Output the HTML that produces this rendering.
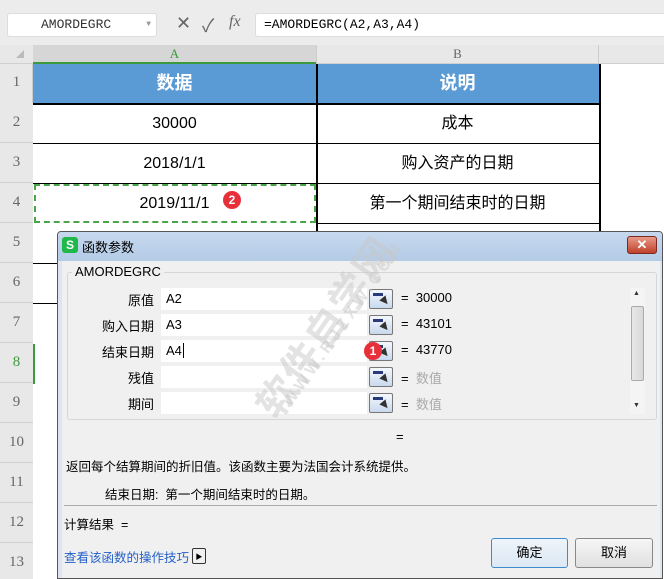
<!DOCTYPE html><html><head><meta charset="utf-8"><style>
*{margin:0;padding:0;box-sizing:border-box}
body{width:664px;height:579px;overflow:hidden;background:#fff;font-family:"Liberation Sans","Noto Sans CJK SC",sans-serif;position:relative}
.a{position:absolute}
.rn{position:absolute;left:0;width:33px;text-align:center;color:#666;font-family:"Liberation Serif","Noto Serif CJK SC",serif;font-size:15px}
.cell{position:absolute;text-align:center;font-size:16px;color:#000;line-height:39px}
.lbl{position:absolute;width:90px;text-align:right;font-size:13px;color:#000;left:64px}
.inp{position:absolute;left:161px;width:206px;height:22px;background:#fff;font-size:13px;padding-left:5px;line-height:22px}
.btn{position:absolute;left:369px;width:24px;height:20px;border:1px solid #777;border-radius:2px;background:linear-gradient(#f4f8fc,#c9d9ee)}
.btn i{position:absolute;left:3px;top:3px;width:10px;height:3px;background:#2a3a7a}
.btn b{position:absolute;left:11px;top:7px;width:0;height:0;border-left:4px solid transparent;border-right:4px solid transparent;border-top:8px solid #333;transform:rotate(-40deg)}
.eq{position:absolute;left:401px;font-size:13px}
</style></head><body>
<div class="a" style="left:0;top:0;width:664px;height:45px;background:#ececec"></div>
<div class="a" style="left:7px;top:13px;width:150px;height:24px;background:#fff;border:1px solid #ddd;border-radius:3px;font-family:'Liberation Mono',monospace;font-size:13px;line-height:22px;padding-left:33px;color:#333">AMORDEGRC<span style="position:absolute;right:5px;font-size:8px;color:#999">▼</span></div>
<div class="a" style="left:176px;top:13px;font-size:18px;color:#666">✕</div>
<div class="a" style="left:202px;top:12px;font-size:18px;color:#666">✓</div>
<div class="a" style="left:229px;top:13px;font-size:16px;color:#666;font-style:italic;font-family:'Liberation Serif',serif">fx</div>
<div class="a" style="left:255px;top:13px;width:420px;height:24px;background:#fff;border:1px solid #ddd;border-radius:3px;font-family:'Liberation Mono',monospace;font-size:13px;line-height:22px;padding-left:8px;color:#000">=AMORDEGRC(A2,A3,A4)</div>
<div class="a" style="left:0;top:45px;width:664px;height:19px;background:#e8e8e8;border-bottom:1px solid #d0d0d0"></div>
<div class="a" style="left:33px;top:45px;width:283px;height:19px;background:#d6d6d6;border-bottom:2px solid #3c9a3c;text-align:center;color:#3c9a3c;font-family:'Liberation Serif',serif;font-size:13px;line-height:18px">A</div>
<div class="a" style="left:316px;top:45px;width:283px;height:19px;border-left:1px solid #ccc;border-right:1px solid #ccc;text-align:center;color:#666;font-family:'Liberation Serif',serif;font-size:13px;line-height:18px">B</div>
<div class="a" style="left:16px;top:50px;width:0;height:0;border-left:8px solid transparent;border-bottom:8px solid #bbb"></div>
<div class="a" style="left:0;top:64px;width:33px;height:515px;background:#e8e8e8;border-right:1px solid #ccc"></div>
<div class="a" style="left:0;top:103px;width:33px;height:476px;background:repeating-linear-gradient(#e8e8e8 0 39px,#d0d0d0 39px 40px)"></div>
<div class="a" style="left:33px;top:344px;width:2px;height:40px;background:#3c9a3c"></div>
<div class="rn" style="top:74px">1</div><div class="rn" style="top:114px">2</div><div class="rn" style="top:154px">3</div><div class="rn" style="top:194px">4</div><div class="rn" style="top:234px">5</div><div class="rn" style="top:274px">6</div><div class="rn" style="top:314px">7</div><div class="rn" style="top:354px;color:#3c9a3c">8</div><div class="rn" style="top:394px">9</div><div class="rn" style="top:434px">10</div><div class="rn" style="top:474px">11</div><div class="rn" style="top:514px">12</div><div class="rn" style="top:554px">13</div>
<div class="a" style="left:33px;top:64px;width:567px;height:40px;background:#5b9bd5"></div>
<div class="cell" style="left:33px;top:64px;width:283px;color:#fff;font-weight:bold;font-size:18px">数据</div>
<div class="cell" style="left:316px;top:64px;width:283px;color:#fff;font-weight:bold;font-size:18px">说明</div>
<div class="a" style="left:316px;top:64px;width:1.5px;height:240px;background:#000"></div>
<div class="a" style="left:599px;top:64px;width:1.5px;height:180px;background:#000"></div>
<div class="a" style="left:33px;top:103px;width:567px;height:1.5px;background:#000"></div>
<div class="a" style="left:33px;top:143px;width:567px;height:1px;background:#000"></div>
<div class="a" style="left:33px;top:183px;width:567px;height:1px;background:#000"></div>
<div class="a" style="left:316px;top:223px;width:284px;height:1px;background:#000"></div>
<div class="a" style="left:33px;top:263px;width:24px;height:1px;background:#000"></div>
<div class="a" style="left:33px;top:303px;width:24px;height:1px;background:#000"></div>
<div class="cell" style="left:33px;top:104px;width:283px">30000</div>
<div class="cell" style="left:316px;top:104px;width:283px">成本</div>
<div class="cell" style="left:33px;top:144px;width:283px">2018/1/1</div>
<div class="cell" style="left:316px;top:144px;width:283px">购入资产的日期</div>
<div class="cell" style="left:33px;top:184px;width:283px">2019/11/1</div>
<div class="cell" style="left:316px;top:184px;width:283px">第一个期间结束时的日期</div>
<div class="a" style="left:34px;top:184px;width:282px;height:39px;border:2px dashed #4aa54a"></div>
<div class="a" style="left:223px;top:191px;width:18px;height:18px;border-radius:50%;background:#e8303a;color:#fff;font-size:12px;font-weight:bold;text-align:center;line-height:18px">2</div>
<div class="a" style="left:57px;top:231px;width:606px;height:348px;background:#f0f0f0;border:1px solid #555;border-radius:4px 4px 0 0;overflow:hidden">
 <div class="a" style="left:0;top:0;width:606px;height:29px;background:linear-gradient(#c6d8ee,#b4cbe6)"></div>
 <div class="a" style="left:4px;top:5px;width:16px;height:16px;background:#1fb94a;border-radius:3px;color:#fff;font-size:12px;font-weight:bold;text-align:center;line-height:16px">S</div>
 <div class="a" style="left:24px;top:5px;font-size:13px">函数参数</div>
 <div class="a" style="left:569px;top:4px;width:30px;height:18px;background:linear-gradient(#e89a88,#c0402a);border:1px solid #7a2a20;border-radius:3px;color:#fff;font-size:13px;font-weight:bold;text-align:center;line-height:16px">✕</div>
 <div class="a" style="left:0;top:29px;width:4px;height:320px;background:#dde6f0"></div>
 <div class="a" style="left:602px;top:29px;width:4px;height:320px;background:#dde6f0"></div>
</div>
<div class="a" style="left:67px;top:272px;width:590px;height:148px;border:1px solid #d6d6d6;border-radius:3px"></div>
<div class="a" style="left:72px;top:264px;background:#f0f0f0;padding:0 3px;font-size:13px">AMORDEGRC</div>
<div class="a" style="left:630px;top:288px;width:15px;height:126px;background:#f4f4f4"></div>
<div class="a" style="left:631px;top:306px;width:13px;height:75px;background:linear-gradient(90deg,#e8e8e8,#d8d8d8);border:1px solid #aaa;border-radius:2px"></div>
<div class="a" style="left:633px;top:290px;font-size:7px;color:#333">▲</div>
<div class="a" style="left:633px;top:402px;font-size:7px;color:#333">▼</div>
<div class="lbl" style="top:290px">原值</div><div class="inp" style="top:288px">A2</div><div class="btn" style="top:289px"><i></i><b></b></div><div class="eq" style="top:290px">=&nbsp; 30000</div>
<div class="lbl" style="top:316px">购入日期</div><div class="inp" style="top:314px">A3</div><div class="btn" style="top:315px"><i></i><b></b></div><div class="eq" style="top:316px">=&nbsp; 43101</div>
<div class="lbl" style="top:342px">结束日期</div><div class="inp" style="top:340px">A4<span style="border-left:1px solid #000;margin-left:1px"></span></div><div class="btn" style="top:341px"><i></i><b></b></div><div class="eq" style="top:342px">=&nbsp; 43770</div>
<div class="a" style="left:364px;top:342px;width:18px;height:18px;border-radius:50%;background:#e8303a;color:#fff;font-size:12px;font-weight:bold;text-align:center;line-height:18px">1</div>
<div class="lbl" style="top:368px">残值</div><div class="inp" style="top:366px"></div><div class="btn" style="top:367px"><i></i><b></b></div><div class="eq" style="top:368px">=&nbsp; <span style="color:#aaa">数值</span></div>
<div class="lbl" style="top:394px">期间</div><div class="inp" style="top:392px"></div><div class="btn" style="top:393px"><i></i><b></b></div><div class="eq" style="top:394px">=&nbsp; <span style="color:#aaa">数值</span></div>
<div class="a" style="left:396px;top:429px;font-size:13px">=</div>
<div class="a" style="left:66px;top:456px;font-size:12.5px">返回每个结算期间的折旧值。该函数主要为法国会计系统提供。</div>
<div class="a" style="left:105px;top:484px;font-size:12.5px">结束日期:&nbsp; 第一个期间结束时的日期。</div>
<div class="a" style="left:64px;top:505px;width:593px;height:1px;background:#aaa"></div>
<div class="a" style="left:64px;top:514px;font-size:12.5px">计算结果 &nbsp;=</div>
<div class="a" style="left:64px;top:547px;font-size:12.5px;color:#2460c8">查看该函数的操作技巧</div>
<div class="a" style="left:192px;top:548px;width:14px;height:16px;border:1px solid #333;border-radius:2px;font-size:7px;text-align:center;line-height:14px;padding-top:2px">▶</div>
<div class="a" style="left:491px;top:538px;width:77px;height:30px;border:1px solid #3c8ad0;border-radius:3px;background:linear-gradient(#eef4fa,#dce8f4);font-size:13px;text-align:center;line-height:28px">确定</div>
<div class="a" style="left:575px;top:538px;width:78px;height:30px;border:1px solid #888;border-radius:3px;background:linear-gradient(#f6f6f6,#e0e0e0);font-size:13px;text-align:center;line-height:28px">取消</div>
<div class="a" style="left:240px;top:395px;transform:rotate(-55deg);transform-origin:left top;font-size:40px;font-weight:bold;color:rgba(200,200,200,0.5);white-space:nowrap;letter-spacing:2px">软件自学网</div>
<div class="a" style="left:280px;top:400px;transform:rotate(-55deg);transform-origin:left top;font-size:16px;font-weight:bold;color:rgba(200,200,200,0.5);white-space:nowrap;letter-spacing:4px">WWW.RJZXW.COM</div>
</body></html>
